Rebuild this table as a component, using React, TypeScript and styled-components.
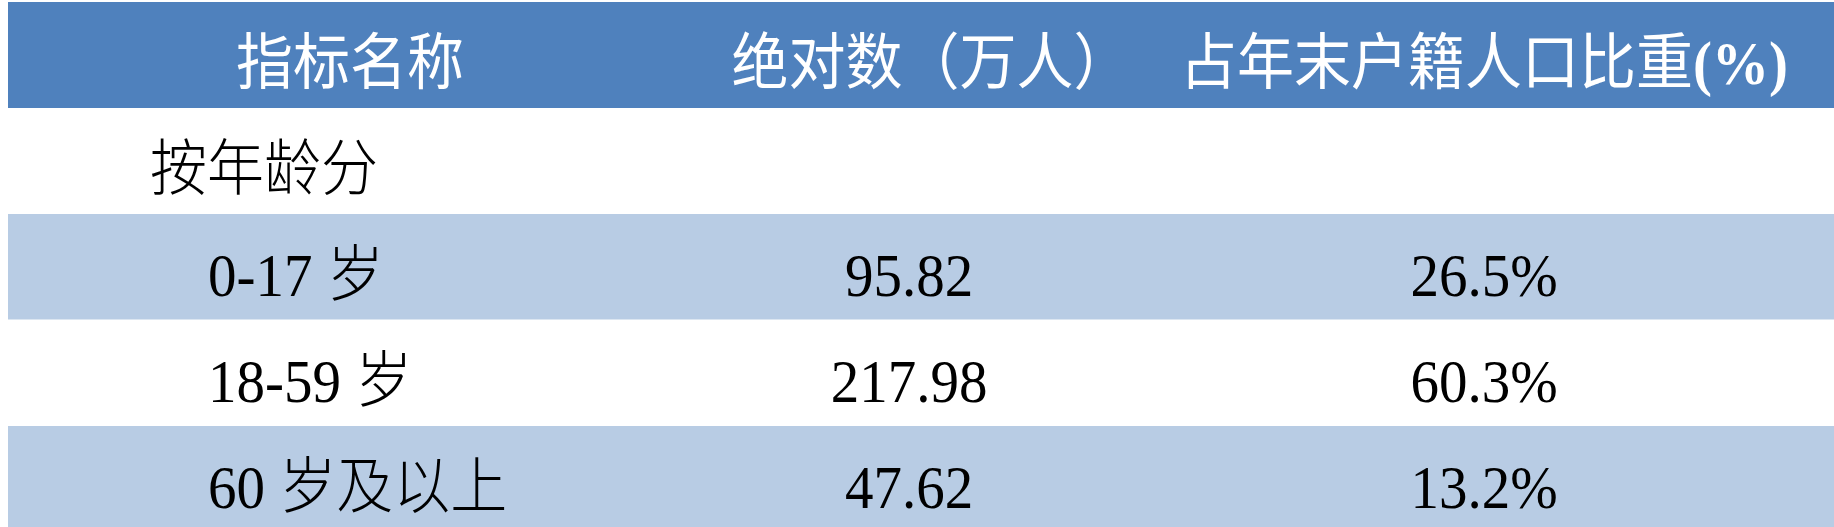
import React from 'react'
import styled, { createGlobalStyle } from 'styled-components'

const GlobalStyle = createGlobalStyle`
  html, body {
    margin: 0;
    padding: 0;
    background: #ffffff;
    overflow: hidden;
  }
`

type Band = 'head' | 'white' | 'light'

const rows: { name: string; indent: boolean; count: string; share: string; band: Band }[] = [
  { name: '按年龄分', indent: false, count: '', share: '', band: 'white' },
  { name: '0-17 岁', indent: true, count: '95.82', share: '26.5%', band: 'light' },
  { name: '18-59 岁', indent: true, count: '217.98', share: '60.3%', band: 'white' },
  { name: '60 岁及以上', indent: true, count: '47.62', share: '13.2%', band: 'light' },
]

const App = () => {
  return (
    <>
      <GlobalStyle />
      <Page>
        <Table>
          <Row $band="head">
            <Cell $align="center">
              <Text>指标名称</Text>
            </Cell>
            <Cell $align="center" $indent={44}>
              <Text>绝对数（万人）</Text>
            </Cell>
            <Cell $align="center">
              <Text>
                占年末户籍人口比重<Latin>(%)</Latin>
              </Text>
            </Cell>
          </Row>
          {rows.map((r) => (
            <Row key={r.name} $band={r.band}>
              <Cell $align="left" $indent={r.indent ? 200 : 142}>
                <Text>{r.name}</Text>
              </Cell>
              <Cell $align="center">
                <Text>{r.count}</Text>
              </Cell>
              <Cell $align="center">
                <Text>{r.share}</Text>
              </Cell>
            </Row>
          ))}
        </Table>
      </Page>
    </>
  )
}

export default App

const Page = styled.div`
  padding: 2px 0 0 8px;
  width: 1834px;
  height: 527px;
  box-sizing: border-box;
`

const Table = styled.div`
  display: flex;
  flex-direction: column;
  width: 1834px;
  font-family: "Liberation Serif", "Noto Sans CJK SC", serif;
  font-size: 57px;
`

const bandColors: Record<Band, string> = {
  head: '#4f81bd',
  white: '#ffffff',
  light: '#b8cce4',
}

const Row = styled.div<{ $band: Band }>`
  display: grid;
  grid-template-columns: 684px 434px 716px;
  height: 106px;
  flex-shrink: 0;
  background-color: ${(p) => bandColors[p.$band]};
  color: ${(p) => (p.$band === 'head' ? '#ffffff' : '#000000')};
  font-weight: ${(p) => (p.$band === 'head' ? 400 : 300)};
  border-bottom: ${(p) => (p.$band === 'light' ? '1px solid #dce6f1' : 'none')};
  box-sizing: border-box;
`

const Cell = styled.div<{ $align: 'left' | 'center'; $indent?: number }>`
  display: flex;
  align-items: center;
  justify-content: ${(p) => (p.$align === 'center' ? 'center' : 'flex-start')};
  padding-left: ${(p) => (p.$indent ? `${p.$indent}px` : '0')};
  padding-top: 15px;
  line-height: 1;
  white-space: nowrap;
  box-sizing: border-box;
`

const Text = styled.span`
  display: inline-block;
  transform: scaleY(1.08);
`

const Latin = styled.span`
  font-weight: bold;
`
